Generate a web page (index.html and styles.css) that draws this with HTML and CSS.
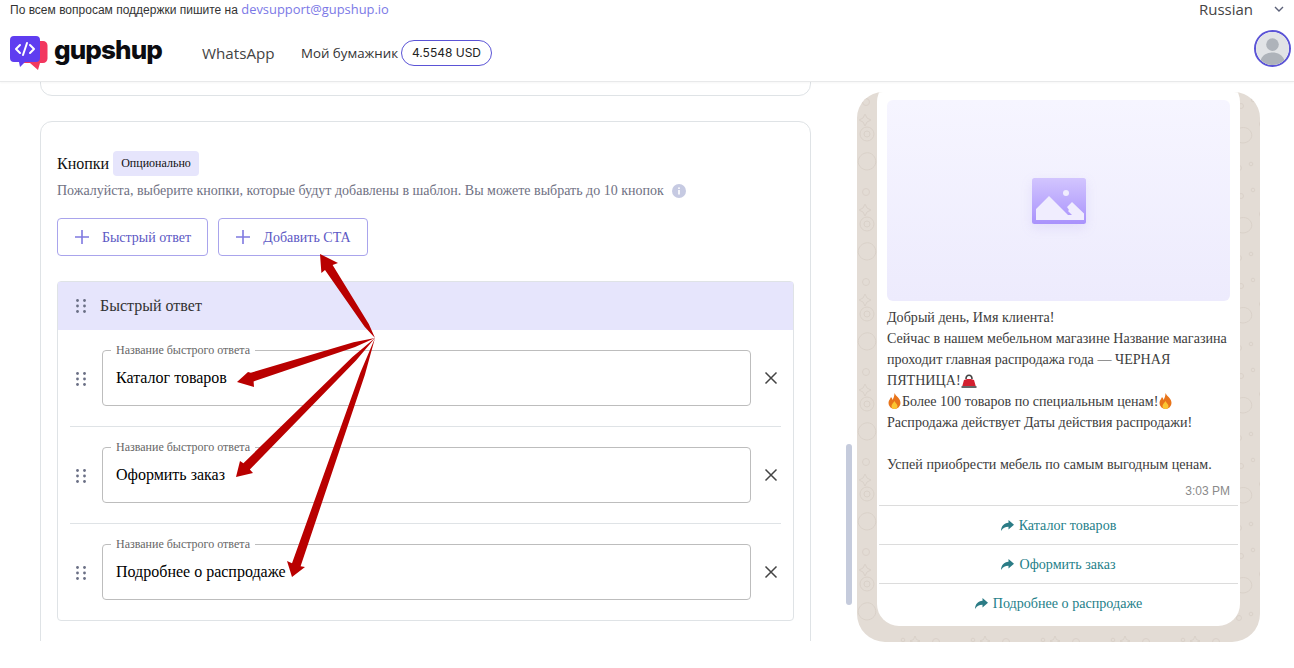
FILE: index.html
```html
<!DOCTYPE html>
<html lang="ru">
<head>
<meta charset="utf-8">
<title>Gupshup</title>
<link rel="stylesheet" href="styles.css">
</head>
<body>
<header class="header">
  <div class="topbar">
    <p class="support">По всем вопросам поддержки пишите на <a class="support-link">devsupport@gupshup.io</a></p>
    <div class="lang"><span>Russian</span>
      <svg class="lang-chevron" viewBox="0 0 10 6" width="10" height="6"><path d="M1 1l4 4 4-4" fill="none" stroke="#5b6078" stroke-width="1.4"/></svg>
    </div>
  </div>
  <nav class="nav">
    <div class="brand">
      <svg class="brand-mark" viewBox="0 0 38 36" width="38" height="36">
        <path d="M14 5h19a4.500 4.500 0 0 1 4.500 4.500v13a4.500 4.500 0 0 1-4.500 4.500h-3l-2 7-8-7H14z" fill="#f2375f"/>
        <path d="M4 0h22a4 4 0 0 1 4 4v18a4 4 0 0 1-4 4H15l-5 5-1-5H4a4 4 0 0 1-4-4V4a4 4 0 0 1 4-4z" fill="#5f3df0"/>
        <path d="M10 9l-4 4 4 4M20 9l4 4-4 4M17 7l-4 12" fill="none" stroke="#fff" stroke-width="2" stroke-linecap="round" stroke-linejoin="round"/>
      </svg>
      <span class="brand-name">gupshup</span>
    </div>
    <a class="nav-link">WhatsApp</a>
    <span class="wallet-label">Мой бумажник</span>
    <span class="wallet-pill">4.5548 USD</span>
    <div class="avatar">
      <svg viewBox="0 0 34 34" width="33" height="33"><circle cx="17" cy="17" r="17" fill="#e1e3e6"/><circle cx="17" cy="13" r="6.5" fill="#aeb3ba"/><path d="M4 31c2-8 8-10 13-10s11 2 13 10a17 17 0 0 1-26 0z" fill="#aeb3ba"/></svg>
    </div>
  </nav>
</header>

<main class="main">
  <section class="editor">
    <div class="card card-prev"></div>
    <div class="card card-buttons">
      <div class="title-row">
        <span class="title">Кнопки</span>
        <span class="tag">Опционально</span>
      </div>
      <div class="desc-row">
        <span>Пожалуйста, выберите кнопки, которые будут добавлены в шаблон. Вы можете выбрать до 10 кнопок</span>
        <svg class="info" viewBox="0 0 14 14" width="14" height="14"><circle cx="7" cy="7" r="7" fill="#c6cae2"/><rect x="6.2" y="6" width="1.6" height="4.5" fill="#fff"/><rect x="6.2" y="3.4" width="1.6" height="1.6" fill="#fff"/></svg>
      </div>
      <div class="add-row">
        <button class="add-btn add-quick"><svg viewBox="0 0 16 16" width="16" height="16"><path d="M8 1v14M1 8h14" stroke="#7f79e0" stroke-width="1.6"/></svg><span>Быстрый ответ</span></button>
        <button class="add-btn add-cta"><svg viewBox="0 0 16 16" width="16" height="16"><path d="M8 1v14M1 8h14" stroke="#7f79e0" stroke-width="1.6"/></svg><span>Добавить СТА</span></button>
      </div>
      <div class="panel">
        <div class="panel-head">
          <svg class="dots" viewBox="0 0 10 14" width="10" height="14"><g fill="#6a6f85"><circle cx="1.5" cy="1.5" r="1.4"/><circle cx="8.5" cy="1.5" r="1.4"/><circle cx="1.5" cy="7" r="1.4"/><circle cx="8.5" cy="7" r="1.4"/><circle cx="1.5" cy="12.5" r="1.4"/><circle cx="8.5" cy="12.5" r="1.4"/></g></svg>
          <span>Быстрый ответ</span>
        </div>
        <div class="row">
          <svg class="dots" viewBox="0 0 10 14" width="10" height="14"><g fill="#6a6f85"><circle cx="1.5" cy="1.5" r="1.4"/><circle cx="8.5" cy="1.5" r="1.4"/><circle cx="1.5" cy="7" r="1.4"/><circle cx="8.5" cy="7" r="1.4"/><circle cx="1.5" cy="12.5" r="1.4"/><circle cx="8.5" cy="12.5" r="1.4"/></g></svg>
          <fieldset class="field"><legend>Название быстрого ответа</legend><span>Каталог товаров</span></fieldset>
          <svg class="close" viewBox="0 0 14 14" width="14" height="14"><path d="M1.5 1.5l11 11M12.5 1.5l-11 11" stroke="#444" stroke-width="1.5"/></svg>
        </div>
        <div class="row">
          <svg class="dots" viewBox="0 0 10 14" width="10" height="14"><g fill="#6a6f85"><circle cx="1.5" cy="1.5" r="1.4"/><circle cx="8.5" cy="1.5" r="1.4"/><circle cx="1.5" cy="7" r="1.4"/><circle cx="8.5" cy="7" r="1.4"/><circle cx="1.5" cy="12.5" r="1.4"/><circle cx="8.5" cy="12.5" r="1.4"/></g></svg>
          <fieldset class="field"><legend>Название быстрого ответа</legend><span>Оформить заказ</span></fieldset>
          <svg class="close" viewBox="0 0 14 14" width="14" height="14"><path d="M1.5 1.5l11 11M12.5 1.5l-11 11" stroke="#444" stroke-width="1.5"/></svg>
        </div>
        <div class="row">
          <svg class="dots" viewBox="0 0 10 14" width="10" height="14"><g fill="#6a6f85"><circle cx="1.5" cy="1.5" r="1.4"/><circle cx="8.5" cy="1.5" r="1.4"/><circle cx="1.5" cy="7" r="1.4"/><circle cx="8.5" cy="7" r="1.4"/><circle cx="1.5" cy="12.5" r="1.4"/><circle cx="8.5" cy="12.5" r="1.4"/></g></svg>
          <fieldset class="field"><legend>Название быстрого ответа</legend><span>Подробнее о распродаже</span></fieldset>
          <svg class="close" viewBox="0 0 14 14" width="14" height="14"><path d="M1.5 1.5l11 11M12.5 1.5l-11 11" stroke="#444" stroke-width="1.5"/></svg>
        </div>
      </div>
    </div>
  </section>

  <aside class="preview">
    <div class="phone">
      <svg class="wallpaper" width="403" height="550" aria-hidden="true">
        <defs>
          <pattern id="doodle" width="70" height="90" patternUnits="userSpaceOnUse">
            <g fill="none" stroke="#d5ccc3" stroke-width="1">
              <circle cx="9" cy="10" r="3.500"/><circle cx="10" cy="42" r="7"/><circle cx="10" cy="42" r="3"/>
              <path d="M8 22l2 4 4 2-4 2-2 4-2-4-4-2 4-2z"/>
              <path d="M2 66c4-7 13-7 16 0s-3 12-8 12-11-5-8-12z"/>
              <circle cx="34" cy="14" r="2.500"/><circle cx="46" cy="8" r="1.800"/>
              <path d="M28 40c4-6 13-6 16 0s-3 11-8 11-11-5-8-11z"/>
              <circle cx="56" cy="32" r="3.500"/><circle cx="60" cy="64" r="5"/>
              <circle cx="32" cy="76" r="2.500"/><circle cx="44" cy="72" r="1.800"/>
              <path d="M58 4l1.500 3.500 3.500 1.500-3.500 1.500-1.500 3.500-1.500-3.500-3.500-1.500 3.500-1.500z"/>
            </g>
          </pattern>
        </defs>
        <rect width="403" height="550" fill="url(#doodle)"/>
      </svg>
      <div class="bubble">
        <div class="media">
          <svg class="media-icon" viewBox="0 0 54 46" width="54" height="46">
            <defs><linearGradient id="pic" x1="0" y1="0" x2="0" y2="1"><stop offset="0" stop-color="#d2c5fe"/><stop offset="1" stop-color="#a992fc"/></linearGradient></defs>
            <rect width="54" height="46" rx="2.5" fill="url(#pic)"/>
            <circle cx="34" cy="15" r="3" fill="#f0edfe"/>
            <path d="M4 42V31l13-13 19 19h4l-4-4 1-1-2-3 5-5 12 11.5V42z" fill="#f0edfe"/>
          </svg>
        </div>
        <div class="message">
          <div>Добрый день, Имя клиента!</div>
          <div>Сейчас в нашем мебельном магазине Название магазина</div>
          <div>проходит главная распродажа года — ЧЕРНАЯ</div>
          <div>ПЯТНИЦА!<svg class="emoji" viewBox="0 0 16 14" width="16" height="14"><path d="M5 5c0-5 6-5 6 0" fill="none" stroke="#444" stroke-width="1.6"/><path d="M1 13l2-7c2-1.500 8-1.500 10 0l2 7z" fill="#d3202f"/><rect x="0.500" y="12" width="15" height="2" fill="#666"/></svg></div>
          <div><svg class="emoji" viewBox="0 0 14 16" width="15" height="16"><path d="M7 0c1 3 6 5 6 10a6 6 0 0 1-12 0c0-3 2-4 2.500-6 1 1 1.500 2 1.500 3 1-2 2-4 2-7z" fill="#e8741a"/><path d="M7 8c.5 2 3 3 3 5a3 3 0 0 1-6 0c0-2 2-3 3-5z" fill="#fbc531"/></svg>Более 100 товаров по специальным ценам!<svg class="emoji" viewBox="0 0 14 16" width="15" height="16"><path d="M7 0c1 3 6 5 6 10a6 6 0 0 1-12 0c0-3 2-4 2.500-6 1 1 1.500 2 1.500 3 1-2 2-4 2-7z" fill="#e8741a"/><path d="M7 8c.5 2 3 3 3 5a3 3 0 0 1-6 0c0-2 2-3 3-5z" fill="#fbc531"/></svg></div>
          <div>Распродажа действует Даты действия распродажи!</div>
          <div class="blank"></div>
          <div>Успей приобрести мебель по самым выгодным ценам.</div>
        </div>
        <div class="time">3:03 PM</div>
        <div class="reply"><svg viewBox="0 0 13 11" width="13" height="11"><path d="M7.500 0L13 4.800 7.500 9.500V6.800C4 6.800 2 7.800 0 11 .2 6 3 3 7.500 2.700z" fill="#2b7c86"/></svg><span>Каталог товаров</span></div>
        <div class="reply"><svg viewBox="0 0 13 11" width="13" height="11"><path d="M7.500 0L13 4.800 7.500 9.500V6.800C4 6.800 2 7.800 0 11 .2 6 3 3 7.500 2.700z" fill="#2b7c86"/></svg><span>Оформить заказ</span></div>
        <div class="reply"><svg viewBox="0 0 13 11" width="13" height="11"><path d="M7.500 0L13 4.800 7.500 9.500V6.800C4 6.800 2 7.800 0 11 .2 6 3 3 7.500 2.700z" fill="#2b7c86"/></svg><span>Подробнее о распродаже</span></div>
      </div>
    </div>
    <div class="scroll-thumb"></div>
  </aside>
</main>

<svg class="arrows" width="1294" height="668" aria-hidden="true">
  <g fill="#b90000">
    <polygon points="375,338 368.800,324 332.600,264.900 338,263 320,254 321.400,273 325,269.900 364.600,326.800"/>
    <polygon points="375,338 355.100,347 253.600,381.400 254,387 237,382 248,372 250.800,372.800 353.500,342.200"/>
    <polygon points="375,338 356,360.600 249.800,469.600 253,473 236,477 240,461 243.400,463.200 352.400,357"/>
    <polygon points="375,338 364.900,374.800 300.600,566.200 305,567 292,577 287,561 292,563.200 360.100,373.200"/>
  </g>
</svg>
</body>
</html>
```

FILE: styles.css
```css
* { box-sizing: border-box; }
html, body { margin: 0; padding: 0; }
body {
  width: 1294px;
  height: 668px;
  overflow: hidden;
  background: #fff;
  font-family: "Liberation Serif", "Times New Roman", serif;
  color: #000;
  position: relative;
}

/* header */
.header {
  height: 82px;
  border-bottom: 1px solid #e8e9ea;
  box-shadow: 0 1px 2px rgba(0, 0, 0, .04);
  position: relative;
  z-index: 2;
  background: #fff;
}
.topbar {
  height: 18px;
  display: flex;
  justify-content: space-between;
  align-items: center;
  padding: 0 10px;
}
.support {
  margin: 0;
  font: 12px/18px "Liberation Sans", Arial, sans-serif;
  color: #333;
}
.support-link {
  font-family: "Open Sans", sans-serif;
  font-size: 12.9px;
  color: #7b78e6;
}
.lang {
  display: flex;
  align-items: center;
  gap: 21px;
  font: 15px/18px "Open Sans", sans-serif;
  color: #444;
}
.nav {
  height: 63px;
  display: flex;
  align-items: center;
  padding: 0 3px 0 10px;
}
.brand {
  display: flex;
  align-items: center;
  gap: 6px;
  width: 192px;
  flex: none;
  margin-top: 9px;
}
.brand-mark { flex: none; }
.brand-name {
  font: 800 26px/30px Inter, sans-serif;
  letter-spacing: -.9px;
  color: #0c0c10;
  margin-top: -8px;
}
.nav-link {
  font: 15.2px/20px "Open Sans", sans-serif;
  color: #444;
  width: 99px;
  flex: none;
  margin-top: 7px;
}
.wallet-label {
  font: 13.3px/20px "Open Sans", sans-serif;
  color: #333;
  width: 100px;
  flex: none;
  white-space: nowrap;
  margin-top: 7px;
}
.wallet-pill {
  width: 91px;
  height: 26px;
  flex: none;
  margin-top: 7px;
  border: 1px solid #5b54d6;
  border-radius: 13px;
  font: 12px/24px Inter, sans-serif;
  color: #222;
  text-align: center;
}
.avatar {
  margin-left: auto;
  margin-top: -3px;
  width: 37px;
  height: 37px;
  flex: none;
  border: 2px solid #5b54d6;
  border-radius: 50%;
  overflow: hidden;
}
.avatar svg { display: block; }

/* main */
.main {
  height: 586px;
  display: flex;
  position: relative;
}
.editor {
  width: 857px;
  height: 559px;
  padding-left: 40px;
  overflow: hidden;
  flex: none;
}
.card {
  width: 771px;
  background: #fff;
  border: 1px solid #dfe3e6;
  border-radius: 12px;
}
.card-prev {
  height: 54px;
  margin-top: -40px;
}
.card-buttons {
  margin-top: 25px;
  padding: 29px 16px 0;
  height: 560px;
}
.title-row {
  display: flex;
  align-items: center;
  gap: 4px;
  height: 25px;
}
.title { font-size: 16px; color: #111; }
.tag {
  height: 25px;
  padding: 0 8px;
  background: #e6e5fc;
  border-radius: 4px;
  font-size: 12px;
  line-height: 25px;
  color: #111;
}
.desc-row {
  display: flex;
  align-items: center;
  gap: 8px;
  margin-top: 5px;
  height: 20px;
  font-size: 14px;
  color: #6f7183;
}
.add-row {
  display: flex;
  gap: 10px;
  margin-top: 17px;
}
.add-btn {
  height: 38px;
  background: #fff;
  border: 1px solid #a9a4ec;
  border-radius: 4px;
  display: flex;
  align-items: center;
  justify-content: center;
  gap: 12px;
  font: 14px "Liberation Serif", serif;
  color: #5c58c4;
  padding: 0;
}
.add-btn span { margin-top: 2px; }
.add-quick { width: 151px; }
.add-cta { width: 150px; }
.panel {
  margin-top: 25px;
  width: 737px;
  height: 340px;
  border: 1px solid #dfe3e6;
  border-radius: 4px;
}
.panel-head {
  height: 48px;
  background: #e6e5fc;
  display: flex;
  align-items: center;
  gap: 14px;
  padding-left: 18px;
  font-size: 16px;
  color: #333;
}
.dots { flex: none; }
.row {
  display: flex;
  align-items: center;
  height: 97px;
  margin: 0 12px;
  border-bottom: 1px solid #dfe3e6;
}
.row:last-child { border-bottom-color: transparent; }
.row .dots { margin-left: 6px; margin-right: 16px; margin-top: 1px; }
.field {
  width: 649px;
  height: 62px;
  margin: -6px 0 0;
  padding: 11px 13px 0;
  border: 1px solid #bdbdbd;
  border-radius: 4px;
  font-size: 16px;
  line-height: 20px;
  color: #000;
}
.field legend {
  font-size: 12px;
  line-height: 13px;
  padding: 0 5px;
  margin-left: -5px;
  color: #666;
}
.close { margin-left: 13px; flex: none; }

/* preview */
.preview {
  flex: 1;
  position: relative;
  min-width: 0;
}
.phone {
  position: relative;
  width: 403px;
  height: 550px;
  margin-top: 10px;
  background: #e3dcd5;
  border-radius: 26px 26px 28px 28px;
  overflow: hidden;
}
.wallpaper { position: absolute; left: 0; top: 0; opacity: .7; }
.bubble {
  position: relative;
  width: 363px;
  height: 546px;
  margin: -12px 0 0 20px;
  background: #fff;
  border-radius: 22px;
  padding-top: 20px;
}
.media {
  width: 343px;
  height: 201px;
  margin-left: 10px;
  border-radius: 6px;
  background: linear-gradient(#f6f5ff, #edebfd);
  display: flex;
  align-items: center;
  justify-content: center;
}
.media-icon { filter: drop-shadow(0 4px 6px rgba(120, 100, 220, .12)); }
.message {
  margin: 6px 0 0 10px;
  font-size: 14.1px;
  line-height: 21px;
  color: #3c3c3c;
}
.blank { height: 21px; }
.emoji { vertical-align: -3px; }
.time {
  margin: 8px 10px 0 0;
  height: 17px;
  text-align: right;
  font: 12px/17px "Liberation Sans", Arial, sans-serif;
  color: #8a8a8a;
}
.reply {
  margin: 0 2px;
  height: 39px;
  border-top: 1px solid #dcdcdc;
  display: flex;
  align-items: center;
  justify-content: center;
  gap: 5px;
  font-size: 14.1px;
  color: #1f7f8a;
}
.time + .reply { margin-top: 5px; }
.scroll-thumb {
  position: absolute;
  left: -11px;
  top: 362px;
  width: 6px;
  height: 161px;
  background: #c5cbdc;
  border-radius: 3px;
}

/* annotation arrows */
.arrows {
  position: absolute;
  left: 0;
  top: 0;
  z-index: 3;
  pointer-events: none;
}
```
